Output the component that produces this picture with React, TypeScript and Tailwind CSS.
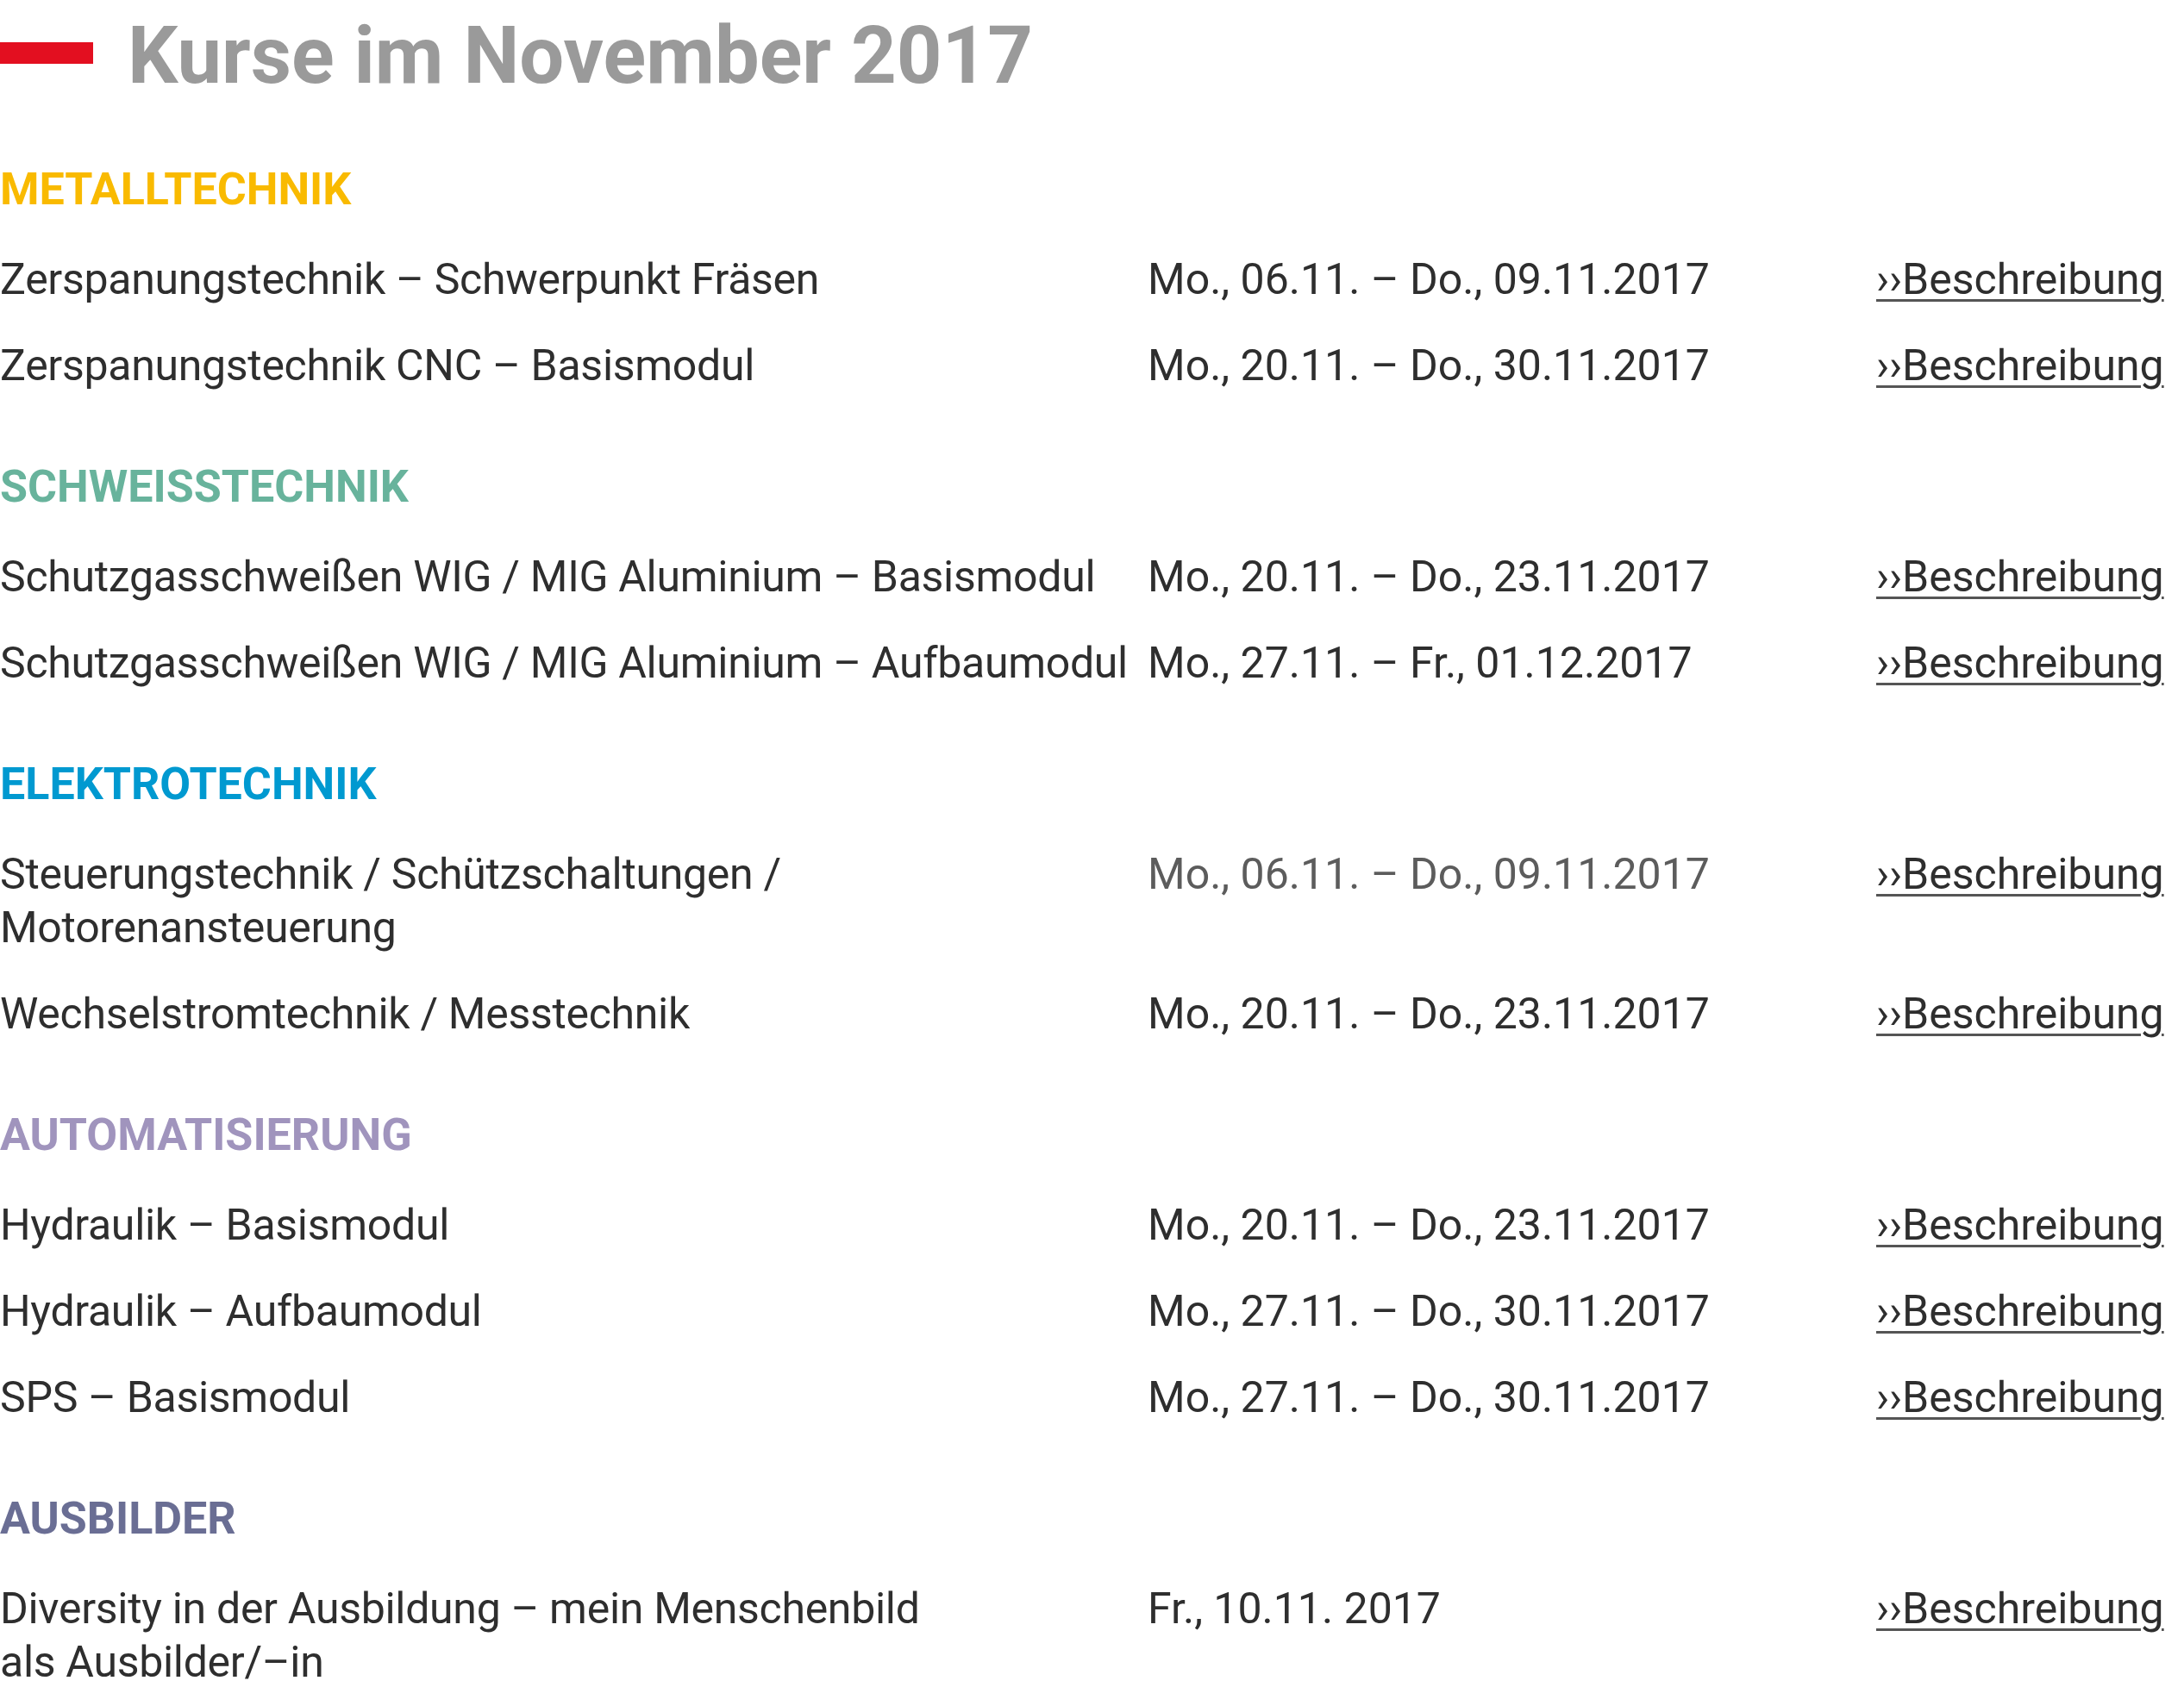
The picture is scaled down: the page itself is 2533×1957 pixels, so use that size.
import React from "react";

type Row = { name: React.ReactNode; date: string; light?: boolean };
type Section = { title: string; color: string; rows: Row[] };

const sections: Section[] = [
  {
    title: "METALLTECHNIK",
    color: "text-[#f9ba00]",
    rows: [
      { name: "Zerspanungstechnik – Schwerpunkt Fräsen", date: "Mo., 06.11. – Do., 09.11.2017" },
      { name: "Zerspanungstechnik CNC – Basismodul", date: "Mo., 20.11. – Do., 30.11.2017" },
    ],
  },
  {
    title: "SCHWEISSTECHNIK",
    color: "text-[#68b39c]",
    rows: [
      { name: "Schutzgasschweißen WIG / MIG Aluminium – Basismodul", date: "Mo., 20.11. – Do., 23.11.2017" },
      { name: "Schutzgasschweißen WIG / MIG Aluminium – Aufbaumodul", date: "Mo., 27.11. – Fr., 01.12.2017" },
    ],
  },
  {
    title: "ELEKTROTECHNIK",
    color: "text-[#0099d0]",
    rows: [
      {
        name: (
          <>
            Steuerungstechnik / Schützschaltungen /<br />
            Motorenansteuerung
          </>
        ),
        date: "Mo., 06.11. – Do., 09.11.2017",
        light: true,
      },
      { name: "Wechselstromtechnik / Messtechnik", date: "Mo., 20.11. – Do., 23.11.2017" },
    ],
  },
  {
    title: "AUTOMATISIERUNG",
    color: "text-[#a094bd]",
    rows: [
      { name: "Hydraulik – Basismodul", date: "Mo., 20.11. – Do., 23.11.2017" },
      { name: "Hydraulik – Aufbaumodul", date: "Mo., 27.11. – Do., 30.11.2017" },
      { name: "SPS – Basismodul", date: "Mo., 27.11. – Do., 30.11.2017" },
    ],
  },
  {
    title: "AUSBILDER",
    color: "text-[#6a6e94]",
    rows: [
      {
        name: (
          <>
            Diversity in der Ausbildung – mein Menschenbild
            <br />
            als Ausbilder/–in
          </>
        ),
        date: "Fr., 10.11. 2017",
      },
    ],
  },
];

export default function App() {
  return (
    <div
      className="w-[2533px] min-h-[1957px] bg-white text-[#2e2e2e]"
      style={{ fontFamily: "Roboto, 'Liberation Sans', sans-serif" }}
    >
      <div className="flex items-start">
        <div className="mt-[49px] h-[25px] w-[108px] shrink-0 bg-[#e30f20]" />
        <h1 className="ml-[40px] text-[92px] font-bold leading-[130px] text-[#9a9a9a]">
          Kurse im November 2017
        </h1>
      </div>

      <div className="mt-[59px] flex flex-col gap-[79px]">
        {sections.map((s) => (
          <section key={s.title}>
            <h2 className={`text-[52px] font-bold leading-[62px] ${s.color}`}>{s.title}</h2>
            <div className="mt-[42px] flex flex-col gap-[38px]">
              {s.rows.map((r, i) => (
                <div key={i} className="grid grid-cols-[1331px_845px_1fr] text-[50px] leading-[62px]">
                  <div className="tracking-[-0.3px]">{r.name}</div>
                  <div className={r.light ? "text-[#5c5c5c]" : ""}>{r.date}</div>
                  <div>
                    <a
                      href="#"
                      className="text-[#2e2e2e] underline decoration-[#555] decoration-[3px] underline-offset-[6px]"
                    >
                      ››Beschreibung
                    </a>
                  </div>
                </div>
              ))}
            </div>
          </section>
        ))}
      </div>
    </div>
  );
}
